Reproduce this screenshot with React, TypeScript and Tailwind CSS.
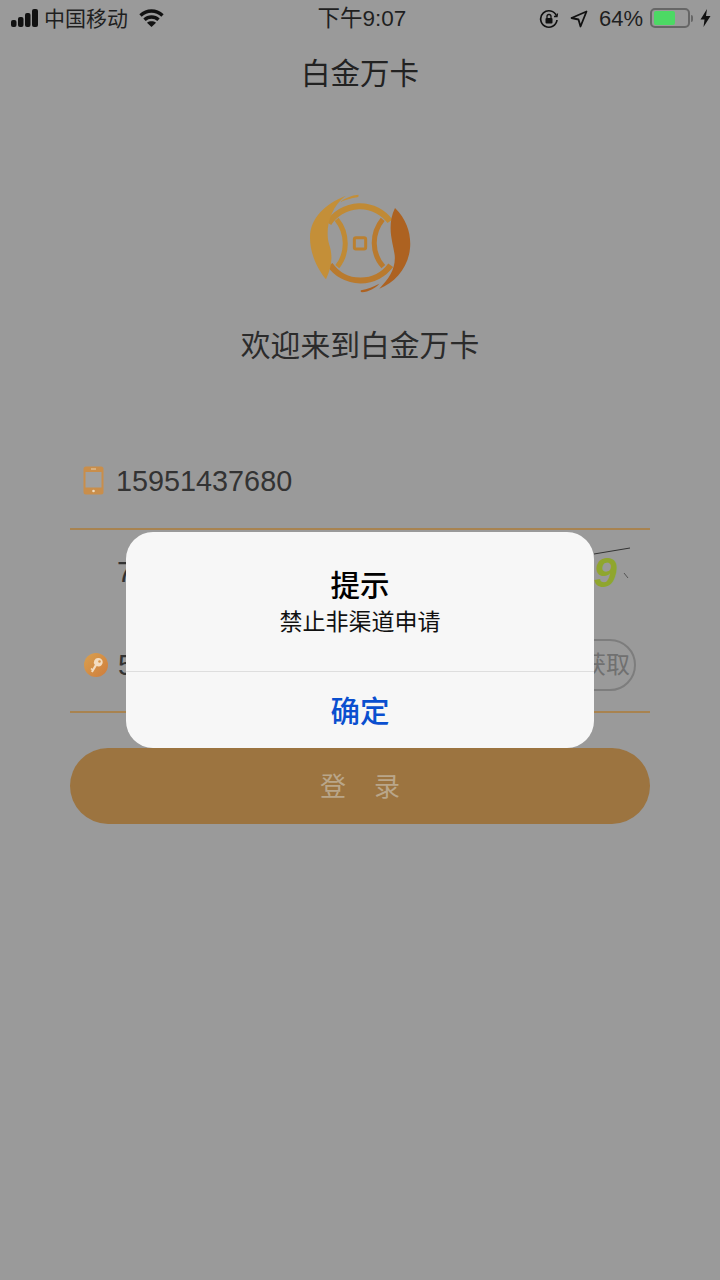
import React from "react";

function Logo() {
  return (
    <svg width="140" height="125" viewBox="0 0 420 375" fill="none">
      <path d="M116 130A112 112 0 0 1 300 124" stroke="#c08a35" strokeWidth="18" />
      <path d="M120 254A112 112 0 0 0 302 256" stroke="#b97a2e" strokeWidth="18" />
      <path d="M140 118C174 160 174 220 142 260" stroke="#c08a35" strokeWidth="15" />
      <path d="M278 118C244 160 244 220 280 260" stroke="#b97a2e" strokeWidth="15" />
      <rect x="193" y="173" width="34" height="34" rx="5" stroke="#bb8030" strokeWidth="9" />
      <path d="M167 47C105 72 60 115 60 172C60 225 85 270 108 298C124 262 130 232 118 195C104 150 118 85 167 47Z" fill="#c48f38" />
      <path d="M150 66C165 54 185 46 205 44C207 48 205 51 202 52C184 55 166 60 150 66Z" fill="#c48f38" />
      <path d="M315 84C352 120 364 165 360 205C355 262 315 308 268 326C298 295 318 265 314 225C310 190 288 140 315 84Z" fill="#ad6221" />
      <path d="M213 331C232 327 252 320 268 311C256 325 236 335 216 337C212 337 211 333 213 331Z" fill="#ad6221" />
    </svg>
  );
}

export default function App() {
  return (
    <div className="relative flex h-[1280px] w-[720px] flex-col overflow-hidden bg-[#9a9a9a] font-['Liberation_Sans','Noto_Sans_CJK_SC',sans-serif] text-[#1f1f1f]">
      {/* status bar */}
      <div className="flex h-[36px] items-center justify-between pl-[11px] pr-[9px]">
        <div className="flex w-[290px] items-center">
          <svg width="28" height="18" viewBox="0 0 28 18" fill="#111">
            <rect x="0" y="11" width="5.500" height="7" rx="2" />
            <rect x="7" y="8" width="5.500" height="10" rx="2" />
            <rect x="14" y="4" width="5.500" height="14" rx="2" />
            <rect x="21" y="0" width="6" height="18" rx="2" />
          </svg>
          <span className="ml-[5px] text-[21px] leading-none">中国移动</span>
          <svg className="ml-[11px]" width="25" height="18" viewBox="0 0 25 18" fill="none" stroke="#111" strokeWidth="3.400">
            <path d="M1.500 6.500C8 0.500 17 0.500 23.500 6.500" />
            <path d="M5.500 10.800C9.500 7 15.500 7 19.500 10.800" />
            <path d="M12.500 18L8 13.700C10.500 11.800 14.500 11.800 17 13.700Z" fill="#111" stroke="none" />
          </svg>
        </div>
        <span className="translate-x-[1px] translate-y-[1px] text-[22.500px] leading-none">下午9:07</span>
        <div className="flex w-[290px] items-center justify-end">
          <svg className="translate-x-[1px] translate-y-[1px]" width="20" height="20" viewBox="0 0 20 20" fill="none" stroke="#111" strokeWidth="1.700">
            <path d="M17.500 7A8.200 8.200 0 1 0 18 11" />
            <path d="M15 7.500L18 7.500L18.500 4.500" strokeWidth="1.300" />
            <rect x="6.500" y="9" width="7" height="5.500" rx="1" fill="#111" stroke="none" />
            <path d="M8 9V7.500A2 2 0 0 1 12 7.500V9" strokeWidth="1.300" />
          </svg>
          <svg className="ml-[12px] translate-y-[1px]" width="18" height="18" viewBox="0 0 18 18" fill="none" stroke="#111" strokeWidth="1.800" strokeLinejoin="round">
            <path d="M16.500 1.500L1.500 8L8.500 9.500L10.500 16.500Z" />
          </svg>
          <span className="ml-[11px] translate-y-[1px] text-[22px] leading-none">64%</span>
          <div className="ml-[7px] flex h-[20px] w-[40px] items-center rounded-[5px] border-2 border-[#666] px-[2px] py-[1px]">
            <div className="h-full w-[21px] rounded-[2px] bg-[#4cd964]" />
          </div>
          <div className="ml-[1px] h-[7px] w-[2px] rounded-r-sm bg-[#666]" />
          <svg className="ml-[7px]" width="11" height="18" viewBox="0 0 11 18" fill="#111">
            <path d="M7 0L0.500 10.500H4.500L3.500 18L10.500 7H6Z" />
          </svg>
        </div>
      </div>

      {/* nav title */}
      <div className="flex h-[74px] items-center justify-center pt-[3px] text-[29.500px] font-normal text-[#222]">白金万卡</div>

      {/* logo */}
      <div className="mt-[70px] flex justify-center">
        <Logo />
      </div>
      <div className="mt-[20px] translate-y-[1px] text-center text-[29.800px] leading-[40px] text-[#2b2b2b]">欢迎来到白金万卡</div>

      {/* form */}
      <div className="mt-[68px] flex flex-col px-[70px]">
        <div className="flex h-[97px] items-center border-b-2 border-[#a88350] pl-[13px]">
          <svg width="21" height="29" viewBox="0 0 21 29">
            <rect x="0.500" y="0.500" width="20" height="28" rx="2.500" fill="#c98e4b" />
            <rect x="2.500" y="6" width="16" height="15.500" fill="#a0a0a0" />
            <rect x="8" y="2.500" width="5" height="1" fill="#e8d0b0" />
            <circle cx="10.500" cy="25" r="1.300" fill="#eedcc0" />
          </svg>
          <span className="ml-[12px] translate-y-[1px] text-[28.800px] leading-none text-[#333]">15951437680</span>
        </div>
        <div className="relative flex h-[85px] items-center pl-[47px]">
          <span className="text-[29px] leading-none text-[#333]">7</span>
          <span className="ml-auto mr-[33px] text-[42px] font-bold italic leading-none text-[#8fa62e]">9</span>
          <svg className="absolute right-[18px] top-[16px]" width="40" height="34" viewBox="0 0 40 34" fill="none">
            <path d="M2 8L38 2" stroke="#333" strokeWidth="1" />
            <path d="M32 27L36 32" stroke="#555" strokeWidth="1" />
          </svg>
        </div>
        <div className="flex h-[98px] items-center border-b-2 border-[#a88350] pl-[14px] pr-[14px]">
          <svg className="translate-y-[2px]" width="24" height="24" viewBox="0 0 24 24">
            <defs>
              <linearGradient id="kg" x1="0" y1="0" x2="1" y2="1">
                <stop offset="0" stopColor="#d9a04f" />
                <stop offset="1" stopColor="#cf7d3c" />
              </linearGradient>
            </defs>
            <circle cx="12" cy="12" r="12" fill="url(#kg)" />
            <path d="M14.500 5A4.200 4.200 0 0 1 14.500 13.400C13.800 13.400 13.200 13.200 12.700 13L8.800 19.500L7 18.500L7.800 17L6.500 16.300L7.300 15L8.600 15.700L10.800 11.800A4.200 4.200 0 0 1 14.500 5Z" fill="#f3dcc0" />
            <circle cx="15.500" cy="8.500" r="1.300" fill="#d9964a" />
          </svg>
          <span className="ml-[10px] translate-y-[2px] text-[29px] leading-none text-[#333]">5</span>
          <div className="ml-auto flex h-[52px] w-[146px] translate-y-[2px] items-center justify-end rounded-full border-2 border-[#7d7d7d] pr-[4px] text-[24px] leading-none text-[#707070]">
            获取
          </div>
        </div>
        <div className="mt-[35px] flex h-[76px] items-center justify-center gap-[28px] rounded-full bg-[#9c7440] pt-[1px] text-[26px] leading-none text-[#b9a68a]">
          <span>登</span>
          <span>录</span>
        </div>
      </div>

      {/* alert */}
      <div className="absolute left-[126px] top-[532px] flex h-[216px] w-[468px] flex-col rounded-[27px] bg-[#f7f7f7]">
        <div className="flex h-[140px] flex-col items-center border-b border-[#dedede] pt-[33px]">
          <div className="translate-y-[1px] text-[29.500px] font-medium leading-[40px] text-black">提示</div>
          <div className="text-[23px] leading-[34px] text-[#111]">禁止非渠道申请</div>
        </div>
        <div className="flex flex-1 items-center justify-center pt-[4px] text-[29.500px] font-medium text-[#0a4fcf]">确定</div>
      </div>
    </div>
  );
}
